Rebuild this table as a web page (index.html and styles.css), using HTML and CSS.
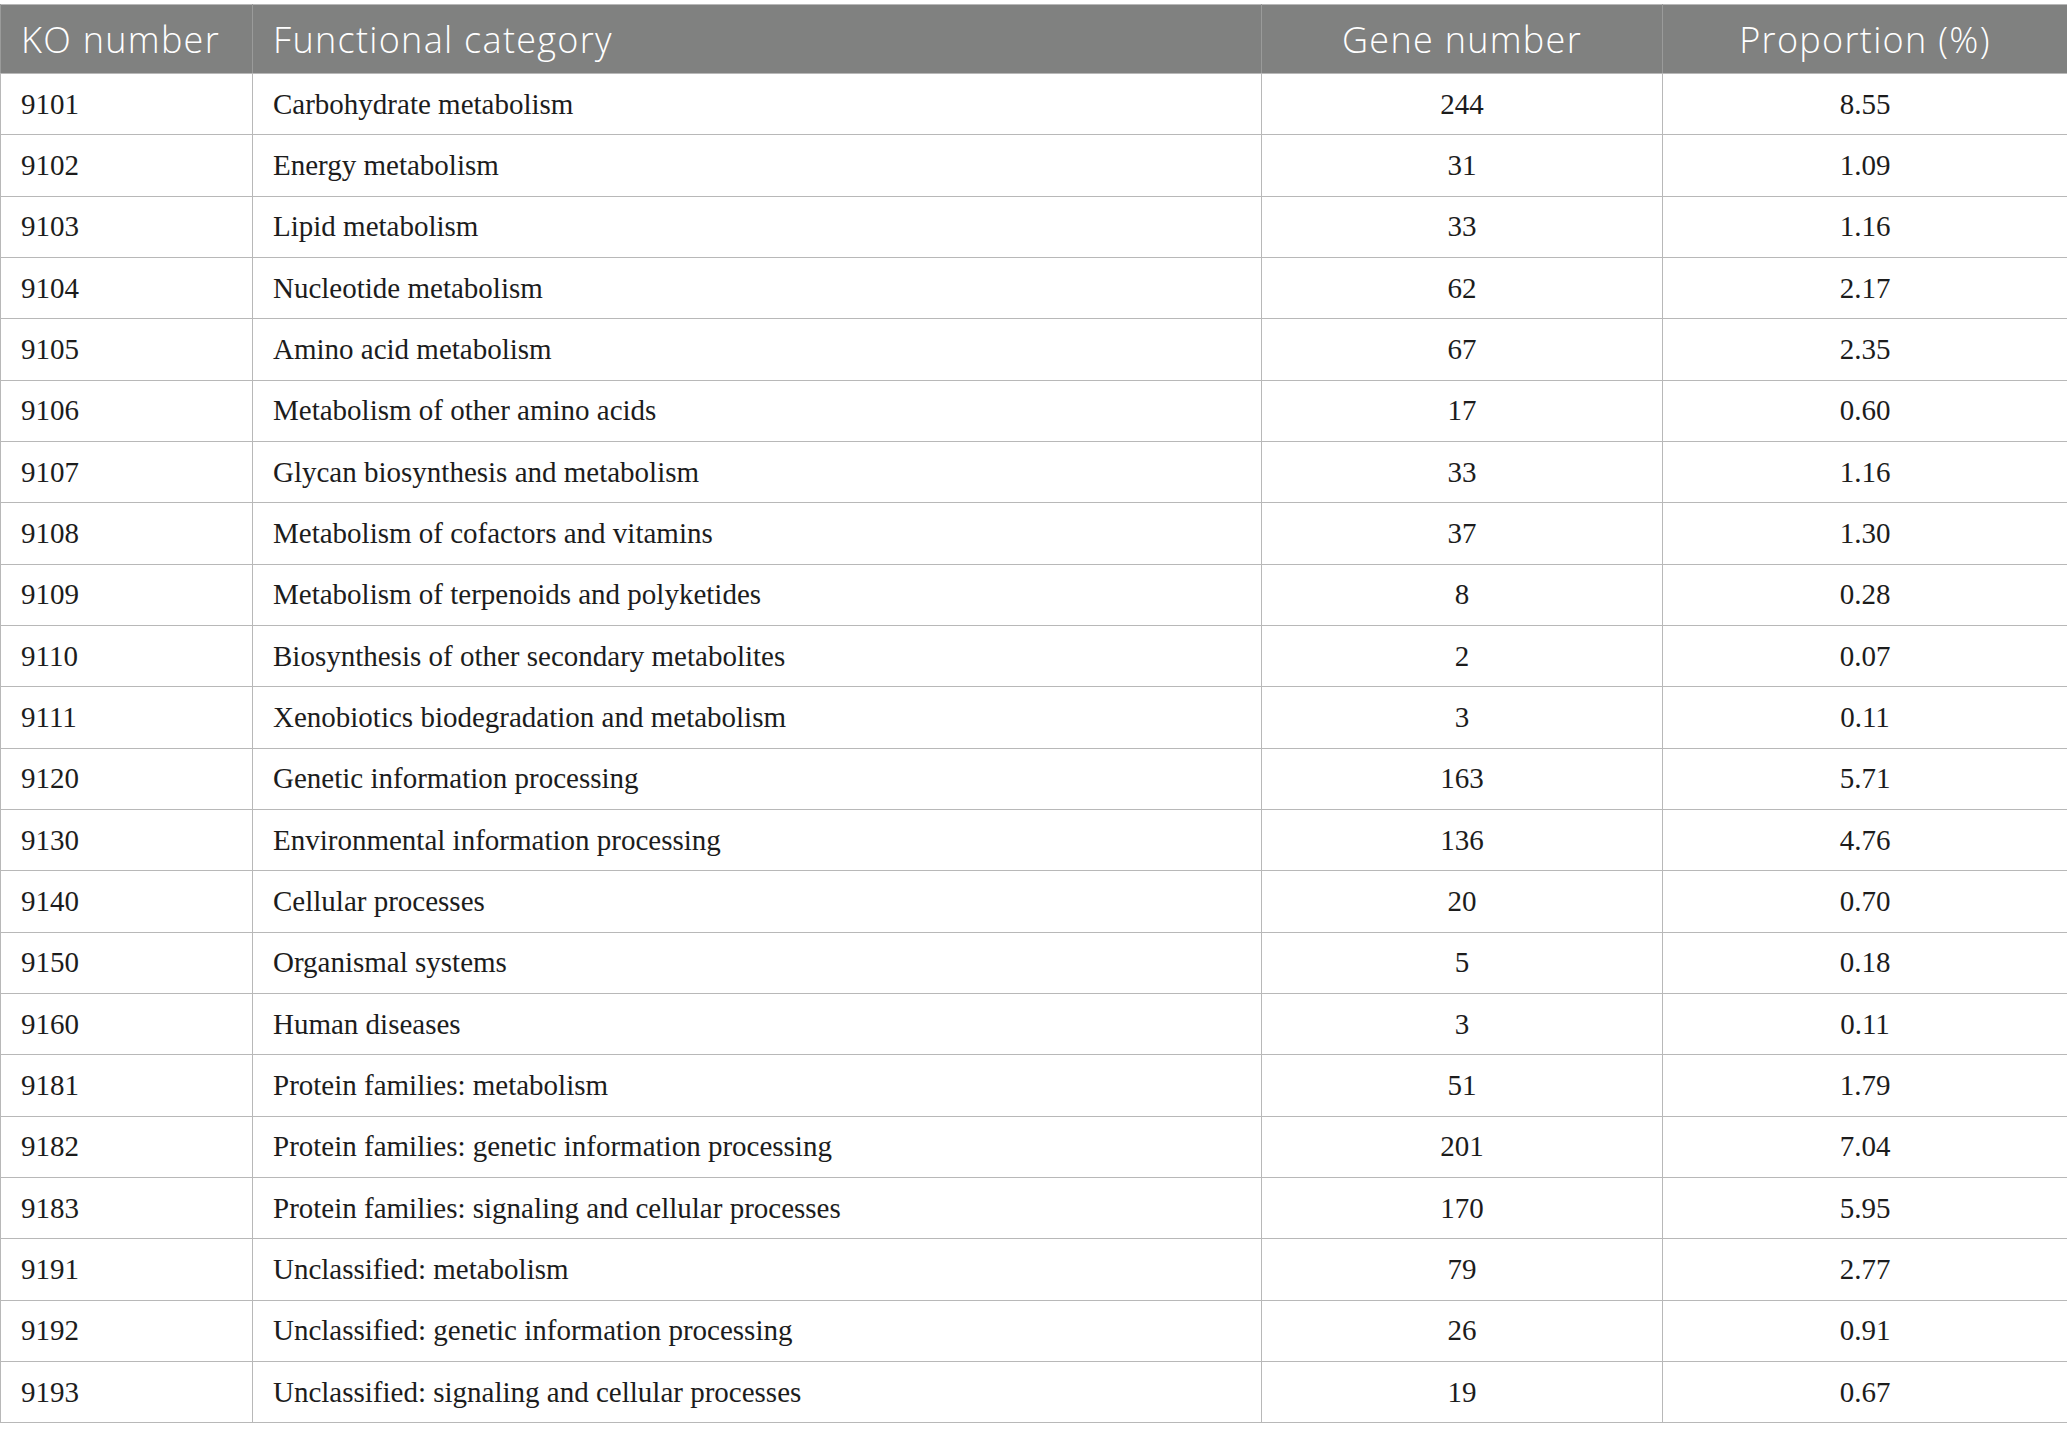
FILE: index.html
```html
<!DOCTYPE html>
<html>
<head>
<meta charset="utf-8">
<link rel="stylesheet" href="styles.css">
</head>
<body>
<table class="ko-table">
  <colgroup>
    <col class="c-ko">
    <col class="c-cat">
    <col class="c-gene">
    <col class="c-prop">
  </colgroup>
  <thead>
    <tr>
      <th class="left">KO number</th>
      <th class="left">Functional category</th>
      <th class="center">Gene number</th>
      <th class="center">Proportion (%)</th>
    </tr>
  </thead>
  <tbody>
    <tr><td>9101</td><td>Carbohydrate metabolism</td><td class="center">244</td><td class="center">8.55</td></tr>
    <tr><td>9102</td><td>Energy metabolism</td><td class="center">31</td><td class="center">1.09</td></tr>
    <tr><td>9103</td><td>Lipid metabolism</td><td class="center">33</td><td class="center">1.16</td></tr>
    <tr><td>9104</td><td>Nucleotide metabolism</td><td class="center">62</td><td class="center">2.17</td></tr>
    <tr><td>9105</td><td>Amino acid metabolism</td><td class="center">67</td><td class="center">2.35</td></tr>
    <tr><td>9106</td><td>Metabolism of other amino acids</td><td class="center">17</td><td class="center">0.60</td></tr>
    <tr><td>9107</td><td>Glycan biosynthesis and metabolism</td><td class="center">33</td><td class="center">1.16</td></tr>
    <tr><td>9108</td><td>Metabolism of cofactors and vitamins</td><td class="center">37</td><td class="center">1.30</td></tr>
    <tr><td>9109</td><td>Metabolism of terpenoids and polyketides</td><td class="center">8</td><td class="center">0.28</td></tr>
    <tr><td>9110</td><td>Biosynthesis of other secondary metabolites</td><td class="center">2</td><td class="center">0.07</td></tr>
    <tr><td>9111</td><td>Xenobiotics biodegradation and metabolism</td><td class="center">3</td><td class="center">0.11</td></tr>
    <tr><td>9120</td><td>Genetic information processing</td><td class="center">163</td><td class="center">5.71</td></tr>
    <tr><td>9130</td><td>Environmental information processing</td><td class="center">136</td><td class="center">4.76</td></tr>
    <tr><td>9140</td><td>Cellular processes</td><td class="center">20</td><td class="center">0.70</td></tr>
    <tr><td>9150</td><td>Organismal systems</td><td class="center">5</td><td class="center">0.18</td></tr>
    <tr><td>9160</td><td>Human diseases</td><td class="center">3</td><td class="center">0.11</td></tr>
    <tr><td>9181</td><td>Protein families: metabolism</td><td class="center">51</td><td class="center">1.79</td></tr>
    <tr><td>9182</td><td>Protein families: genetic information processing</td><td class="center">201</td><td class="center">7.04</td></tr>
    <tr><td>9183</td><td>Protein families: signaling and cellular processes</td><td class="center">170</td><td class="center">5.95</td></tr>
    <tr><td>9191</td><td>Unclassified: metabolism</td><td class="center">79</td><td class="center">2.77</td></tr>
    <tr><td>9192</td><td>Unclassified: genetic information processing</td><td class="center">26</td><td class="center">0.91</td></tr>
    <tr><td>9193</td><td>Unclassified: signaling and cellular processes</td><td class="center">19</td><td class="center">0.67</td></tr>
  </tbody>
</table>
</body>
</html>
```
FILE: styles.css
```css
html, body {
  margin: 0;
  padding: 0;
  background: #ffffff;
}
body {
  padding-top: 4px;
}
.ko-table {
  width: 2067px;
  table-layout: fixed;
  border-collapse: collapse;
  border: 1px solid #b8b8b8;
}
.c-ko { width: 252px; }
.c-cat { width: 1009px; }
.c-gene { width: 401px; }
.c-prop { width: 405px; }

.ko-table th {
  height: 68px;
  background: #808180;
  color: #ffffff;
  font-family: "Open Sans", "Noto Sans", sans-serif;
  font-weight: 300;
  font-size: 36px;
  letter-spacing: 1.3px;
  padding: 0 18px 0 20px;
  vertical-align: middle;
  border-left: 1px solid #9a9b9a;
  border-right: 1px solid #9a9b9a;
  border-bottom: 1px solid #b8b8b8;
  white-space: nowrap;
}
.ko-table th.center { padding-left: 0; padding-right: 0; }
.ko-table td {
  height: 60.34px;
  padding: 0 16px 0 20px;
  font-family: "Liberation Serif", "Times New Roman", serif;
  font-size: 29px;
  color: #1c1c1c;
  border: 1px solid #b8b8b8;
  vertical-align: middle;
  white-space: nowrap;
}
.left { text-align: left; }
.center { text-align: center; }
.ko-table td.center { padding-left: 0; padding-right: 0; }
```
